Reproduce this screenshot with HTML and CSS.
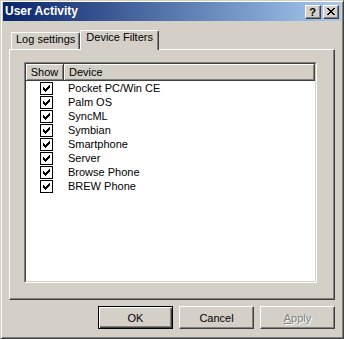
FILE: index.html
```html
<!DOCTYPE html>
<html lang="en">
<head>
  <meta charset="UTF-8" />
  <title>User Activity</title>
  <link rel="stylesheet" href="styles.css">
</head>
<body>
  <div class="window">
    <div class="titlebar">
      <span class="title">User Activity</span>
      <div class="caption-buttons">
        <span class="cap-btn help">?</span>
        <span class="cap-btn close">
          <svg width="8" height="7" viewBox="0 0 8 7" shape-rendering="crispEdges"><path d="M0 0h2v1H0zM6 0h2v1H6zM1 1h2v1H1zM5 1h2v1H5zM2 2h4v1H2zM3 3h2v1H3zM2 4h4v1H2zM1 5h2v1H1zM5 5h2v1H5zM0 6h2v1H0zM6 6h2v1H6z"/></svg>
        </span>
      </div>
    </div>

    <!-- tab strip -->
    <div class="tabs">
      <div class="tab">Log settings</div>
      <div class="tab active">Device Filters</div>
    </div>

    <div class="panel">
      <div class="listview">
        <div class="lv-body">
          <div class="lv-header">
            <div class="lv-col show">Show</div>
            <div class="lv-col device">Device</div>
          </div>
          <ul class="lv-items">
            <li><span class="check"><svg width="7" height="7" viewBox="0 0 7 7" shape-rendering="crispEdges"><path d="M6 0h1v1H6zM5 1h2v1H5zM0 2h1v1H0zM4 2h3v1H4zM0 3h2v1H0zM3 3h3v1H3zM0 4h5v1H0zM1 5h3v1H1zM2 6h1v1H2z"/></svg></span><span class="name">Pocket PC/Win CE</span></li>
            <li><span class="check"><svg width="7" height="7" viewBox="0 0 7 7" shape-rendering="crispEdges"><path d="M6 0h1v1H6zM5 1h2v1H5zM0 2h1v1H0zM4 2h3v1H4zM0 3h2v1H0zM3 3h3v1H3zM0 4h5v1H0zM1 5h3v1H1zM2 6h1v1H2z"/></svg></span><span class="name">Palm OS</span></li>
            <li><span class="check"><svg width="7" height="7" viewBox="0 0 7 7" shape-rendering="crispEdges"><path d="M6 0h1v1H6zM5 1h2v1H5zM0 2h1v1H0zM4 2h3v1H4zM0 3h2v1H0zM3 3h3v1H3zM0 4h5v1H0zM1 5h3v1H1zM2 6h1v1H2z"/></svg></span><span class="name">SyncML</span></li>
            <li><span class="check"><svg width="7" height="7" viewBox="0 0 7 7" shape-rendering="crispEdges"><path d="M6 0h1v1H6zM5 1h2v1H5zM0 2h1v1H0zM4 2h3v1H4zM0 3h2v1H0zM3 3h3v1H3zM0 4h5v1H0zM1 5h3v1H1zM2 6h1v1H2z"/></svg></span><span class="name">Symbian</span></li>
            <li><span class="check"><svg width="7" height="7" viewBox="0 0 7 7" shape-rendering="crispEdges"><path d="M6 0h1v1H6zM5 1h2v1H5zM0 2h1v1H0zM4 2h3v1H4zM0 3h2v1H0zM3 3h3v1H3zM0 4h5v1H0zM1 5h3v1H1zM2 6h1v1H2z"/></svg></span><span class="name">Smartphone</span></li>
            <li><span class="check"><svg width="7" height="7" viewBox="0 0 7 7" shape-rendering="crispEdges"><path d="M6 0h1v1H6zM5 1h2v1H5zM0 2h1v1H0zM4 2h3v1H4zM0 3h2v1H0zM3 3h3v1H3zM0 4h5v1H0zM1 5h3v1H1zM2 6h1v1H2z"/></svg></span><span class="name">Server</span></li>
            <li><span class="check"><svg width="7" height="7" viewBox="0 0 7 7" shape-rendering="crispEdges"><path d="M6 0h1v1H6zM5 1h2v1H5zM0 2h1v1H0zM4 2h3v1H4zM0 3h2v1H0zM3 3h3v1H3zM0 4h5v1H0zM1 5h3v1H1zM2 6h1v1H2z"/></svg></span><span class="name">Browse Phone</span></li>
            <li><span class="check"><svg width="7" height="7" viewBox="0 0 7 7" shape-rendering="crispEdges"><path d="M6 0h1v1H6zM5 1h2v1H5zM0 2h1v1H0zM4 2h3v1H4zM0 3h2v1H0zM3 3h3v1H3zM0 4h5v1H0zM1 5h3v1H1zM2 6h1v1H2z"/></svg></span><span class="name">BREW Phone</span></li>
          </ul>
        </div>
      </div>
    </div>

    <div class="buttons">
      <button class="btn default">OK</button>
      <button class="btn">Cancel</button>
      <button class="btn" disabled><u>A</u>pply</button>
    </div>
  </div>
</body>
</html>
```

FILE: styles.css
```css
:root {
  --face: #d4d0c8;
  --shadow: #808080;
  --dark: #404040;
  --light: #ffffff;
}
* { box-sizing: border-box; margin: 0; padding: 0; }
body {
  background: var(--face);
  font-family: 'Liberation Sans', Arial, sans-serif;
  font-size: 11px;
  color: #000;
}
.window {
  width: 344px;
  height: 339px;
  background: var(--face);
  border-top: 1px solid var(--face);
  border-left: 1px solid var(--face);
  border-right: 1px solid var(--dark);
  border-bottom: 1px solid var(--dark);
  box-shadow: inset 1px 1px var(--light), inset -1px -1px var(--shadow);
  padding: 1px 2px 2px 2px;
}
.titlebar {
  height: 19px;
  background: linear-gradient(to right, #0a246a, #a6caf0);
  display: flex;
  align-items: center;
  justify-content: space-between;
  padding: 0 2px;
}
.title {
  color: #fff;
  font-weight: 700;
  font-size: 12px;
  line-height: 19px;
}
.caption-buttons {
  display: flex;
  gap: 2px;
  align-self: flex-start;
  margin-top: 3px;
}
.cap-btn {
  width: 16px;
  height: 14px;
  background: var(--face);
  border-top: 1px solid var(--light);
  border-left: 1px solid var(--light);
  border-right: 1px solid var(--dark);
  border-bottom: 1px solid var(--dark);
  box-shadow: inset -1px -1px var(--shadow);
  display: flex;
  align-items: center;
  justify-content: center;
}
.cap-btn.help {
  font-weight: 700;
  font-size: 11px;
  line-height: 12px;
  padding-right: 1px;
}
.cap-btn.close svg { margin-right: 1px; margin-bottom: 1px; }

.tabs {
  display: flex;
  align-items: flex-end;
  height: 19px;
  margin: 9px 6px 0 6px;
  padding-left: 2px;
}
.tab {
  height: 17px;
  padding: 0 4px;
  line-height: 13px;
  background: var(--face);
  border-top: 1px solid var(--light);
  border-left: 1px solid var(--light);
  border-right: 1px solid var(--dark);
  border-radius: 2px 2px 0 0;
  box-shadow: inset -1px 0 var(--shadow);
  white-space: nowrap;
}
.tab.active {
  height: 20px;
  padding: 0 5px;
  margin-bottom: -1px;
  position: relative;
  z-index: 1;
}

.panel {
  height: 251px;
  margin: 0 6px;
  padding: 12px 0 0 14px;
  border-top: 1px solid var(--light);
  border-left: 1px solid var(--light);
  border-right: 1px solid var(--dark);
  border-bottom: 1px solid var(--dark);
  box-shadow: inset -1px -1px var(--shadow);
}
.listview {
  width: 293px;
  height: 221px;
  border-top: 1px solid var(--shadow);
  border-left: 1px solid var(--shadow);
  border-right: 1px solid var(--light);
  border-bottom: 1px solid var(--light);
}
.lv-body {
  height: 100%;
  background: #fff;
  border-top: 1px solid var(--dark);
  border-left: 1px solid var(--dark);
  border-right: 1px solid var(--face);
  border-bottom: 1px solid var(--face);
}
.lv-header {
  display: flex;
  height: 17px;
}
.lv-col {
  background: var(--face);
  border-right: 1px solid var(--dark);
  border-bottom: 1px solid var(--dark);
  box-shadow: inset 1px 1px var(--light), inset -1px -1px var(--shadow);
  line-height: 16px;
}
.lv-col.show {
  width: 38px;
  text-align: center;
}
.lv-col.device {
  flex: 1;
  padding-left: 5px;
}
.lv-items { list-style: none; }
.lv-items li {
  display: flex;
  height: 14px;
  line-height: 14px;
  padding-left: 14px;
}
.check {
  width: 13px;
  height: 13px;
  margin-top: 1px;
  border: 1px solid #000;
  background: #fff;
  display: flex;
  align-items: center;
  justify-content: center;
}
.name { margin-left: 15px; }

.buttons {
  display: flex;
  justify-content: flex-end;
  gap: 6px;
  margin: 6px 6px 0 6px;
}
.btn {
  width: 75px;
  height: 23px;
  font-family: 'Liberation Sans', Arial, sans-serif;
  font-size: 11px;
  color: #000;
  background: var(--face);
  border-top: 1px solid var(--light);
  border-left: 1px solid var(--light);
  border-right: 1px solid var(--dark);
  border-bottom: 1px solid var(--dark);
  box-shadow: inset -1px -1px var(--shadow);
  border-radius: 0;
}
.btn.default {
  border: 1px solid #000;
  box-shadow: inset 1px 1px var(--light), inset -1px -1px var(--dark), inset -2px -2px var(--shadow);
}
.btn:disabled {
  color: var(--shadow);
  text-shadow: 1px 1px var(--light);
}
```
